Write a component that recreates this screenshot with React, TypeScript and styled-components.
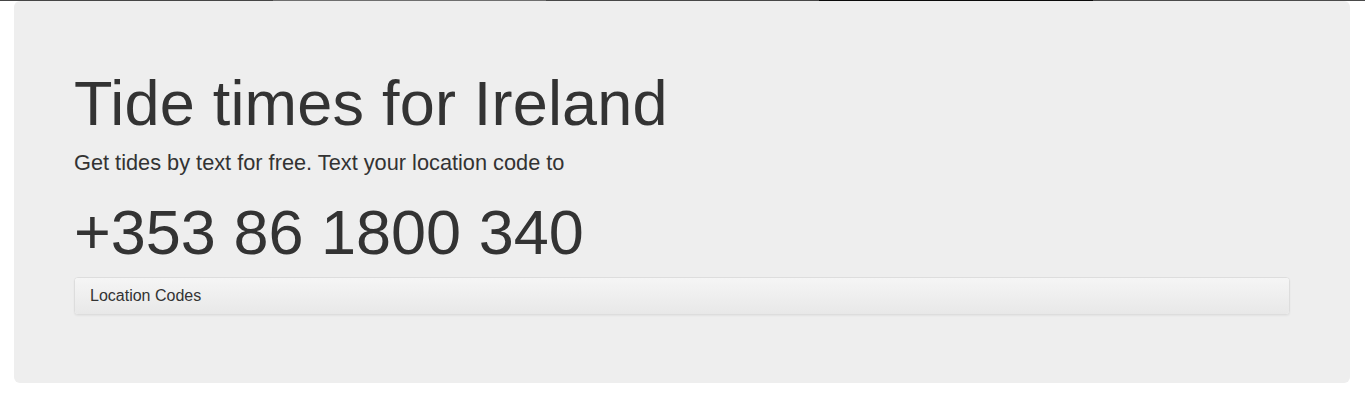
import React from "react";
import styled, { createGlobalStyle } from "styled-components";

const Global = createGlobalStyle`
  html, body { margin: 0; padding: 0; background: #fff; }
  body {
    font-family: "Liberation Sans", Arial, Helvetica, sans-serif;
    font-size: 14px;
    line-height: 1.42857143;
    color: #333;
  }
  * { box-sizing: border-box; }
`;

const TopStrip = styled.div`
  height: 1px;
  background: linear-gradient(
    to right,
    #454545 0px, #454545 273px,
    #6e6e6e 273px, #6e6e6e 546px,
    #474747 546px, #474747 819px,
    #0a0a0a 819px, #0a0a0a 1093px,
    #4a4a4a 1093px, #4a4a4a 100%
  );
`;

const Page = styled.div`
  padding: 0 15px 0 14px;
`;

const Jumbotron = styled.section`
  background: #eeeeee;
  border-radius: 6px;
  padding: 48px 60px;
  display: flow-root;
`;

const Title = styled.h1<{ $after?: number; $spacing?: number }>`
  font-size: 63px;
  font-weight: 500;
  line-height: 1.1;
  margin: 20px 0 ${(p) => p.$after ?? 10}px;
  color: #333;
  letter-spacing: ${(p) => p.$spacing ?? 0}px;
`;

const Lead = styled.p`
  font-size: 21.75px;
  font-weight: 200;
  line-height: 30px;
  margin: 0 0 15px;
`;

const Panel = styled.div`
  margin-bottom: 20px;
  background: #fff;
  border: 1px solid #dddddd;
  border-radius: 4px;
  box-shadow: 0 1px 2px rgba(0, 0, 0, 0.05);
  overflow: hidden;
`;

const PanelHeading = styled.div`
  padding: 8px 15px 9px;
  line-height: 19px;
  font-size: 16px;
  color: #333;
  background: linear-gradient(to bottom, #f5f5f5 0%, #e8e8e8 100%);
`;

export default function App() {
  return (
    <>
      <Global />
      <TopStrip />
      <Page>
        <Jumbotron>
          <Title $spacing={0.2}>Tide times for Ireland</Title>
          <Lead>Get tides by text for free. Text your location code to</Lead>
          <Title $after={9}>+353 86 1800 340</Title>
          <Panel>
            <PanelHeading>Location Codes</PanelHeading>
          </Panel>
        </Jumbotron>
      </Page>
    </>
  );
}
